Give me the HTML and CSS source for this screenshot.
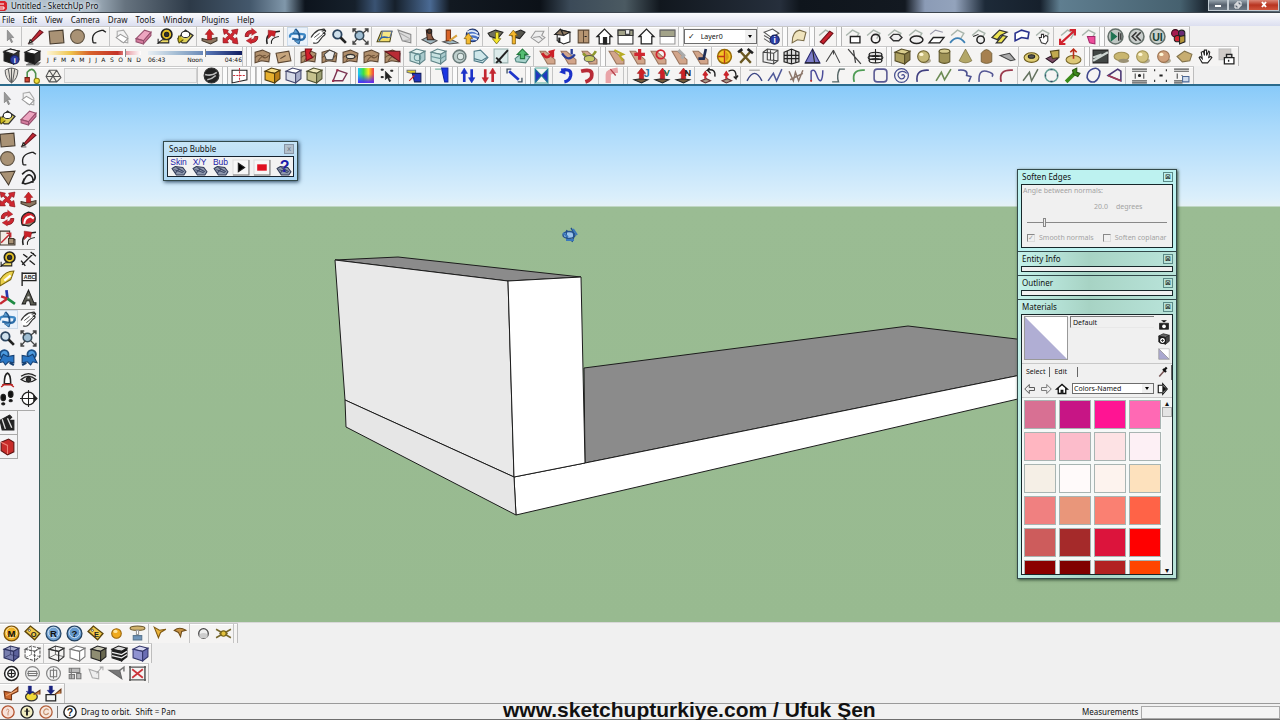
FILE: index.html
```html
<!DOCTYPE html>
<html lang="en">
<head>
<meta charset="utf-8">
<title>Untitled - SketchUp Pro</title>
<link rel="stylesheet" href="styles.css">
</head>
<body>
<header class="titlebar">
  <svg class="logo" viewBox="0 0 8 12"><path d="M0 1h5l2 2v6l-2 2H0z" fill="#d8242c"/><path d="M0 4h4M0 7h4v2H0" stroke="#fff" fill="none"/></svg>
  <h1 class="title">Untitled - SketchUp Pro</h1>
  <div class="winbtns">
    <button aria-label="Minimize"><svg viewBox="0 0 10 8"><path d="M2 5h6" stroke="#fff" stroke-width="2"/></svg></button>
    <button aria-label="Restore"><svg viewBox="0 0 10 8"><path d="M4 1h4v4H4zM2 3h4v4H2z" stroke="#fff" fill="#56616e"/></svg></button>
    <button class="quit" aria-label="Close"><svg viewBox="0 0 10 8"><path d="M3 1l4 5M7 1L3 6" stroke="#fff" stroke-width="2"/></svg></button>
  </div>
</header>
<nav class="menu">
  <button>File</button><button>Edit</button><button>View</button><button>Camera</button><button>Draw</button><button>Tools</button><button>Window</button><button>Plugins</button><button>Help</button>
</nav>
<section class="toolbars">
  <div class="row">
    <div class="bar" data-tools="select : pencil rect circle arc | component eraser tape paint | push move rotate offset : orbit* pan zoom extents | photo terrain | person crayon earth | getmodel share sheet : iso top front side front2 side2 ;"></div>
    <label class="combo layer"><span class="tick">✓</span><select aria-label="Layer"><option>Layer0</option></select></label>
    <div class="bar end" data-tools=": layers ; fold ; redpen ; bzrect bzcirc bzhex bzell bzpar bzarc bzcirc2 bzyel , bzblue bzhand : redarrow pinkbox ; play rewind ui gems"></div>
  </div>
  <div class="row">
    <div class="bar" data-tools=", shadowset shadow"></div>
    <div class="sun">
      <input class="months" type="range" min="0" max="100" value="84" aria-label="Date">
      <div class="marks"><i>J</i><i>F</i><i>M</i><i>A</i><i>M</i><i>J</i><i>J</i><i>A</i><i>S</i><i>O</i><i>N</i><i>D</i></div>
    </div>
    <div class="sun">
      <input class="hours" type="range" min="0" max="100" value="60" aria-label="Time">
      <div class="marks"><i>06:43</i><i>Noon</i><i>04:46</i></div>
    </div>
    <div class="bar end" data-tools=": ; sand1 sand2 : sand3 sand4 sand5 sand1 sand6 : gl1 gl2 gl3 gl4 sword gl5 : fr1 fr2 fr3 ; jt1 jt2 jt3 jt4 jt5 | coin tools : box3 grid3 cone3 lines needle stack ; cube ball cyl pyr dome plate | torus boxes disc ; slope blob ball2 ball3 blob2 hand lock ,"></div>
  </div>
  <div class="row">
    <div class="bar" data-tools=", shell path net"></div>
    <div class="field"></div>
    <div class="bar end" data-tools=": globe ; , section ; ; ycube wcube gcube : quad ; rainbow points ; flag ; bluebar ; updown redud : diag ; bow : bcurve rcurve : pcurve : : pj pv pn : undo2 redo2 : c1 c2 c3 c4 c5 c6 c7 c8 c9 c10 c11 c12 c13 | c14 c15 wrench c16 c17 : al1 al2 al3 ,"></div>
  </div>
</section>
<main class="work">
  <aside class="side">
    <div class="pair" data-tools="select component paint eraser"></div>
    <div class="pair" data-tools="rect pencil circle arc tri squiggle"></div>
    <div class="pair" data-tools="move push rotate follow scale offset"></div>
    <div class="pair" data-tools="tape dims protract label axes text3d"></div>
    <div class="pair" data-tools="orbit* pan zoom extents prev next"></div>
    <div class="pair" data-tools="camera eye feet compass"></div>
    <div class="pair single" data-tools="clapper"></div>
    <div class="pair single" data-tools="redbox"></div>
  </aside>
  <section class="canvas">
    <svg class="model" viewBox="40 86 1240 536" preserveAspectRatio="xMinYMin slice">
      <g stroke="#1c1c1c" stroke-width="1" stroke-linejoin="round">
        <path d="M584 368L908 326L1100 349L1100 359L585 463z" fill="#8b8b8b"/>
        <path d="M514 477L585 463L1100 359V380L516 515z" fill="#fff"/>
        <path d="M335 260L398 257L581 277L508 281z" fill="#8b8b8b"/>
        <path d="M335 260L508 281L514 477L345 400z" fill="#e9e9e9"/>
        <path d="M345 400L514 477L516 515L346 427z" fill="#e6e6e6"/>
        <path d="M508 281L581 277L585 463L514 477z" fill="#fff"/>
      </g>
      <g fill="none" stroke="#24508c" stroke-width="1.500"><ellipse cx="569" cy="235" rx="6" ry="3.500" fill="#9cc4ea"/><path d="M571 228q5 6 1 14M567 230q-2 5 1 10"/><path d="M563 233l5 4M573 229l4 6M566 240h8" stroke="#3b78bc" stroke-width="2"/></g>
    </svg>

    <section class="win soap">
      <header><h2>Soap Bubble</h2><button class="x" aria-label="Close">x</button></header>
      <div class="soapbar" data-tools="skin xy bub run stop help"></div>
    </section>

    <div class="tray">
      <section class="win">
        <header><h2>Soften Edges</h2><button class="x" aria-label="Close">⊠</button></header>
        <div class="inner soften">
          <label for="ang">Angle between normals:</label>
          <p class="deg"><output>20.0</output><span>degrees</span></p>
          <input id="ang" class="angle" type="range" min="0" max="180" value="21" disabled>
          <div class="checks">
            <label><input type="checkbox" checked disabled>Smooth normals</label>
            <label><input type="checkbox" disabled>Soften coplanar</label>
          </div>
        </div>
      </section>
      <section class="win"><header><h2>Entity Info</h2><button class="x" aria-label="Close">⊠</button></header><div class="inner slim"></div></section>
      <section class="win"><header><h2>Outliner</h2><button class="x" aria-label="Close">⊠</button></header><div class="inner slim"></div></section>
      <section class="win">
        <header><h2>Materials</h2><button class="x" aria-label="Close">⊠</button></header>
        <div class="inner mats">
          <div class="current">
            <svg class="preview" viewBox="0 0 42 42"><path d="M0 0h42v42z" fill="#fff"/><path d="M0 0v42h42z" fill="#b0aed4"/></svg>
            <input class="matname" value="Default" aria-label="Material name">
            <div class="mattools" data-tools="pane create defmat"></div>
          </div>
          <div class="tabs"><button class="on">Select</button><button>Edit</button><span data-tools="dropper"></span></div>
          <div class="lib">
            <span data-tools="back fwd home"></span>
            <label class="combo"><select aria-label="Library"><option>Colors-Named</option></select></label>
            <span data-tools="details"></span>
          </div>
          <div class="list">
            <div class="swatches"></div>
            <div class="scroll"><button aria-label="Up">▴</button><b></b><button aria-label="Down">▾</button></div>
          </div>
        </div>
      </section>
    </div>
  </section>
</main>
<section class="toolbars bottom">
  <div class="row"><div class="bar end" data-tools=", gm gtag gr gq gtag2 gball gtable"></div><div class="bar end narrow" data-tools="gfly gfly2 : gsph gx :"></div></div>
  <div class="row"><div class="bar end" data-tools=", bxray bdash | bwire bhid bshade bzebra bmono"></div></div>
  <div class="row"><div class="bar end" data-tools=", tg1 tg2 tg3 tg4 tg5 tg6 tg7"></div></div>
  <div class="row"><div class="bar end" data-tools=", or1 or2 or3"></div></div>
</section>
<footer class="status">
  <div class="hint"><span data-tools="st1 st2 st3"></span><span class="split"></span><span data-tools="sthelp"></span><span>Drag to orbit.&nbsp; Shift = Pan</span></div>
  <strong class="credit">www.sketchupturkiye.com / Ufuk Şen</strong>
  <label class="measure">Measurements<input type="text"></label>
</footer>
<script src="app.js"></script>
</body>
</html>
```
FILE: styles.css
```css
* { box-sizing: border-box; }
body { margin: 0; height: 100vh; display: flex; flex-direction: column; overflow: hidden; background: #f0f0f0; color: #111; font: 8px/10px "Noto Sans", "Open Sans", sans-serif; }
button, input, select { font: inherit; color: inherit; }
button { border: 0; padding: 0; background: none; }
h1, h2, p { margin: 0; font: inherit; }
svg { display: block; }

.titlebar { display: flex; align-items: center; height: 13px; flex: none; background: linear-gradient(90deg, #b8c6d2 0, #aab9c6 90px, #66737f 125px, #2d3a48 190px, #44586c 250px, #8097aa 285px, #0d141d 305px, #16202b 355px, #3a5373 375px, #16202b 395px, #4a6a94 430px, #121921 450px, #0c1118 540px, #3b4a58 570px, #4b5a62 625px, #11171e 660px, #262f3c 780px, #0f151c 800px, #131921 905px, #8b9bb6 925px, #93a3bc 955px, #1d2a38 985px, #16202c 1040px, #5f7e90 1060px, #46616f 1180px, #1d2833 1205px, #5c6b78 1280px); border-bottom: 1px solid #3c454e; }
.logo { width: 8px; height: 12px; }
.title { padding-left: 3px; flex: 1; color: #0c0f12; text-shadow: 0 0 3px #fff, 0 0 5px #dfe7ee; }
.winbtns { display: flex; align-self: flex-start; height: 11px; margin-right: 1px; }
.winbtns button { width: 20px; background: linear-gradient(#98a4ae, #56616e 50%, #6e7a86); border: 1px solid #c3ccd4; border-top: 0; display: grid; place-items: center; }
.winbtns .quit { width: 31px; background: linear-gradient(#dc8878, #b83420 50%, #d0543c); }
.winbtns svg { width: 10px; height: 8px; }

.menu { display: flex; align-items: center; gap: 8px; height: 13px; padding-left: 2px; flex: none; background: linear-gradient(#fafbfd, #dcdff0); }
.toolbars { flex: none; }
.row { display: flex; width: fit-content; height: 20px; border-top: 1px solid #c9c9c9; box-shadow: inset 0 1px #fff; align-items: stretch; background: #f5f4f3; }
.toolbars:not(.bottom) { height: 60px; border-bottom: 2px solid #2b6b8c; }
.toolbars:not(.bottom) .row:last-child { height: 18px; }
.bar { display: flex; align-items: center; }
.bar.end { border-right: 1px solid #bdbdbd; }
.tool { width: 21px; height: 19px; display: grid; place-items: center; flex: none; }
.tool svg { width: 17px; height: 17px; overflow: visible; }
.narrow .tool { width: 20px; }
.tool.active { background: #eaf2fb; outline: 1px solid #cddbea; outline-offset: -1px; }
.s1 { width: 1px; }
.s3, .s4, .s6 { align-self: stretch; border-left: 1px solid #c4c4c4; }
.s3 { width: 3px; }
.s4 { width: 4px; }
.s6 { width: 6px; border-right: 1px solid #b4b4b4; background: #fbfbfb; }

.combo { display: flex; align-items: center; background: #fff; border: 1px solid #6d6d6d; height: 11px; }
.combo select { flex: 1; min-width: 0; height: 9px; padding: 0 0 0 1px; border: 0; appearance: none; font-size: 7px; line-height: 9px; background: linear-gradient(#f0f0f0, #f0f0f0) right / 11px 9px no-repeat, #fff; outline: 0; }
.combo::after { content: ""; border: 2px solid transparent; border-top: 3px solid #000; border-bottom: 0; margin: 0 4px 0 -8px; pointer-events: none; }
.layer { width: 73px; height: 15px; align-self: center; }
.layer select { height: 13px; background-size: 11px 13px; font-size: 7px; }
.tick { padding: 0 5px 0 3px; font-family: "DejaVu Sans", sans-serif; }

.sun { width: 94px; margin-left: 4px; padding-top: 4px; }
.sun + .sun { margin-left: 7px; }
.sun input { display: block; width: 100%; height: 4px; margin: 0; appearance: none; }
.sun input::-webkit-slider-thumb { appearance: none; width: 3px; height: 8px; background: #fff; border-right: 1px solid #888; }
.months { background: linear-gradient(90deg, #fdf6d8, #efc44c 25%, #d8642c 45%, #c43228 75%, #e8a0a8 85%, #fff); }
.hours { background: linear-gradient(90deg, #e9eff4, #a4bdd4 30%, #7391bc 55%, #5878b8 62%, #101c60); }
.marks { display: flex; justify-content: space-between; font: 6px/8px "DejaVu Sans", sans-serif; padding-top: 1px; }
.marks i { font-style: normal; }
.field { width: 133px; margin: 1px 0; border: 1px solid #d0d0d0; background: #f0f0f0; }

.work { flex: 1; min-height: 0; display: flex; }
.side { width: 40px; flex: none; padding-top: 3px; border-right: 1px solid #3a5a5c; background: #f3f3f5; }
.pair { display: grid; grid-template-columns: 21px 21px; width: 38px; margin-left: -3px; padding-bottom: 2px; border-bottom: 1px solid #a9a9a9; }
.pair.single { width: 21px; padding: 2px 0; border-right: 1px solid #a9a9a9; }
.canvas { position: relative; flex: 1; min-width: 0; overflow: hidden; background: linear-gradient(#88caf9, #a9d9fb 40px, #dbeffb 112px, #e4f1f5 120px, #9abc93 121px, #98ba90); }
.model { width: 100%; height: 100%; }

.win { border: 1px solid #33494a; background: linear-gradient(90deg, #c4f1ea, #a7d3c4 45%, #b9e4da); padding: 0 3px 3px; }
.win > header { display: flex; align-items: center; justify-content: space-between; height: 14px; padding-left: 1px; }
.x { width: 10px; height: 10px; border: 1px solid #5b8a87; font: 7px/7px "DejaVu Sans", sans-serif; }
.soap { position: absolute; left: 123px; top: 55px; width: 135px; background: linear-gradient(#c7e5f7, #b0d8f4); box-shadow: 1px 1px 4px #24405c; }
.soap > header { padding-left: 2px; }
.soap .x { background: #b3c0cc; border-color: #8795a5; color: #6a7480; }
.soapbar { display: flex; height: 21px; border: 1px solid #16222e; background: #f2f2f2; }
.soapbar .tool { height: 20px; }
.tray { position: absolute; right: 103px; top: 83px; width: 160px; box-shadow: 1px 1px 3px #2f4a34; }
.tray .win + .win { border-top: 0; }
.tray .win:first-child { background: #bdf2f0; }
.inner { border: 1px solid #17272a; background: #f0f0f0; }
.slim { height: 6px; }
.soften { height: 64px; padding: 1px 1px; color: #a3a3a3; font-size: 7px; }
.soften label { display: block; line-height: 9px; }
.deg { display: flex; gap: 8px; padding: 7px 0 6px 71px; line-height: 9px; }
.angle { display: block; width: 140px; height: 10px; margin: 0 4px; appearance: none; background: linear-gradient(#888, #888) center / 100% 1px no-repeat; }
.angle::-webkit-slider-thumb { appearance: none; width: 3px; height: 9px; border: 1px solid #888; background: #eee; }
.checks { display: flex; gap: 9px; padding: 6px 0 0 4px; white-space: nowrap; }
.checks label { display: flex; align-items: center; gap: 4px; }
.checks input { appearance: none; width: 8px; height: 8px; margin: 0; border: 1px solid #888; border-right-color: #ddd; border-bottom-color: #ddd; }
.checks input:checked::after { content: "✓"; display: block; font: 7px/6px "DejaVu Sans", sans-serif; }
.current { display: flex; gap: 2px; height: 49px; padding: 1px 2px 0; border-bottom: 1px solid #c8c8c8; }
.preview { width: 44px; height: 44px; border: 1px solid #999; flex: none; }
.matname { width: 84px; height: 12px; padding: 0 2px; border: 1px solid #777; border-right: 0; border-bottom-color: #e8e8e8; background: #f0f0f0; font-size: 7px; }
.mattools .tool { width: 15px; height: 15px; }
.mattools svg { width: 12px; height: 12px; }
.tabs { display: flex; height: 16px; align-items: center; font-size: 7px; }
.tabs button { padding: 0 4px; height: 10px; border-right: 1px solid #666; }
.tabs button + button { padding-right: 10px; }
.tabs span { margin-left: auto; }
.tabs .tool { width: 19px; height: 15px; }
.tabs svg { width: 12px; height: 12px; }
.lib { display: flex; align-items: center; height: 17px; }
.lib span { display: flex; }
.lib .tool { width: 16px; }
.lib .tool svg { width: 12px; height: 12px; }
.lib .combo { width: 82px; margin-left: 2px; }
.list { display: flex; height: 177px; border-top: 1px solid #c8c8c8; }
.swatches { display: grid; grid-template-columns: repeat(4, 32px); grid-auto-rows: 29px; gap: 3px; padding: 2px 0 0 2px; overflow: hidden; background: #f6f9f8; width: 140px; flex: none; }
.swatches button { border: 1px solid #a8b4b2; }
.scroll { display: flex; flex-direction: column; flex: 1; background: #f4f4f4; }
.scroll button { height: 9px; line-height: 8px; }
.scroll b { height: 10px; border: 1px solid #aaa; background: #e4e4e4; margin-bottom: auto; }

.bottom { height: 81px; border-top: 1px solid #d8d8d8; }
.status { flex: none; display: grid; grid-template-columns: 503fr 578fr 199fr; height: 17px; align-items: center; border-top: 1px solid #9a9a9a; border-bottom: 1px solid #6e6e6e; background: #f1f1f1; }
.hint { display: flex; align-items: center; }
.hint > span { display: flex; }
.hint .tool { width: 18px; height: 15px; margin-left: -1px; margin-right: 2px; }
.hint .tool svg { width: 14px; height: 14px; }
.split { height: 12px; width: 5px; border-left: 1px solid #777; }
.credit { font: bold 21px/16px "Liberation Sans", Arial, sans-serif; white-space: nowrap; position: relative; z-index: 1; bottom: 2px; }
.measure { display: flex; gap: 3px; align-items: center; padding-left: 1px; }
.measure input { flex: 1; min-width: 0; height: 13px; border: 1px solid #aaa; background: #f4f4f4; }
```
FILE: app.js
```js
const p = (d, fill = 'none', stroke = '#222', w = 1) => `<path d="${d}" fill="${fill}" stroke="${stroke}" stroke-width="${w}"/>`;
const o = (x, y, r, fill = 'none', stroke = '#222', w = 1) => `<circle cx="${x}" cy="${y}" r="${r}" fill="${fill}" stroke="${stroke}" stroke-width="${w}"/>`;
const e = (x, y, rx, ry, fill = 'none', stroke = '#222', w = 1) => `<ellipse cx="${x}" cy="${y}" rx="${rx}" ry="${ry}" fill="${fill}" stroke="${stroke}" stroke-width="${w}"/>`;
const t = (s, x, y, fill = '#222', size = 8, weight = 'bold') => `<text x="${x}" y="${y}" fill="${fill}" font-family="Liberation Sans, sans-serif" font-weight="${weight}" font-size="${size}" text-anchor="middle">${s}</text>`;
const cube = (a, b, c, s = '#222') => p('M1 4L7 1L15 3L10 6z', a, s) + p('M1 4L10 6V15L1 12z', b, s) + p('M10 6L15 3V11L10 15z', c, s);
const glass = cube('#e4f3f1', '#c8e2e1', '#a9cacd', '#5f8488');
const sand = p('M1 4L8 2L15 5L14 13L7 12L1 14z', '#b08f6c', '#5b4632') + p('M1 9q4-4 7-1t6-1M4 12q3-5 7-5', 'none', '#6e5237');
const frayed = p('M1 3h5l9 8v4H8z', '#d2a58a', '#98735c');
const redUp = p('M8 1l4 5H10v5H6V6H4z', '#cc2226', '#8f1114', .5);
const pale = p('M2 7l6-5 6 3-3 5', 'none', '#a9b5ac', 1.3);
const orbit = p('M1 9q-1-4 5-4l8 1q2 1 0 3', 'none', '#3c86c4', 2.2) + p('M15 8q-1 4-6 3l-6-1', 'none', '#2b6ca8', 2) + p('M6 1q6 5 3 14', 'none', '#1d5085', 1.8) + p('M6 1l-2 4 5 0zM9 15l-4-3 6-1z', '#5b9fd6', '#1d5085', .6);
const lens = o(6, 6, 4, '#cfe0ec', '#2c4560', 1.7) + p('M9 9l5 5', 'none', '#222', 2.5);
const ball = (c, d) => e(10, 12, 5, 2.5, '#b1aa95', 'none') + o(8, 8, 5.5, c, d) + e(6, 6, 2, 1.6, '#fff8d8', 'none');
const badge = (s, c, d) => o(8, 8, 7, c, d, 1.2) + o(8, 7, 5, c, '#fff', .6) + t(s, 8, 11.5, '#111', 9);
const tag = s => p('M1 6l5-5 9 7-5 6z', '#f2c94a', '#5a430c', 1.3) + o(5, 5, 1, '#fff', '#333', .7) + t(s, 9, 11, '#222', 7);
const panHand = p('M1 9q3-5 7-7l5-1q2 1-2 2l3-1q2 1-2 3l2 0q1 1-2 3l-4 5q-2 2-5 1', '#fff', '#333', 1.1) + p('M4 9l5-4M6 11l6-5', 'none', '#333', .8);
const hand = p('M5 14L2 9l1-1 2 2-1-6 2-1 1 4V2h2v5l2-4 1 1-1 5 2-1 1 1-4 5z', '#fff', '#222');
const magic = p('M2 9l3-2 7 1 3 4-2 3H6z', '#8f98ac', '#303a56') + p('M4 10l8 3M6 8l7 4M5 13l4-4', 'none', '#3e4867');
const blueWire = (a, b, c, s) => cube(a, b, c, s) + p('M1 12L7 9L15 11M7 9V1', 'none', s, .6);
const fish = o(5, 5, 4, '#4d9be0', '#1c4f86', 1.7) + p('M4 5l4 2 6-1v7l-5-1-3 3-2-3-4 1z', '#2a76c4', '#153e70') + p('M10 13l4 2', 'none', '#153e70', 2);

const icons = {
  select: p('M5 2v10l2-2 2 4 1-1-2-4h3z', '#999', '#777', .6),
  pencil: p('M2 14L12 2l3 2L5 13z', '#c32834', '#6e1620') + p('M2 14l3-1-2-2z', '#f0d6a0', '#222') + p('M1 15h5', 'none', '#222', .7),
  rect: p('M1 3l13-1 1 12-13 1z', '#a99275', '#43382c'),
  circle: o(8, 8, 6.5, '#a99275', '#5c5040'),
  arc: p('M3 14Q0 4 12 2M3 14h3M12 2l3 2', 'none', '#222', 1.3),
  tri: p('M1 3l14-1-6 13z', '#a99275', '#43382c'),
  squiggle: p('M2 5q7-7 11-1t-4 9-5-3 6-4 2 7M2 14l2-5', 'none', '#222', 1.5),
  component: p('M3 3l6-1 4 6v6l-6-1-4-5z', '#f3f3f3', '#aaa') + p('M2 9l4-3 7 4-4 4z', '#fff', '#999'),
  eraser: p('M1 10L9 2l6 2-7 8z', '#eda5c0', '#97506e') + p('M1 10l7 2v3l-7-2zM8 12l7-8v3l-7 8z', '#d57c9e', '#97506e'),
  tape: o(10, 6, 5, '#e3c026', '#222', 1.5) + o(10, 6, 2, '#333') + p('M2 14h10v-3H6zM2 10v5', '#eedb65', '#222'),
  paint: p('M1 10L8 2l7 5-6 7H5z', '#dfd25c', '#333', 1.3) + e(8, 6, 4, 3, '#fff', '#222') + p('M2 7q-2 4 0 7l4-3', '#c8b61c', '#554b0c'),
  push: p('M1 10l5 1 9-2v3l-6 3-8-3z', '#8c7660', '#43382c') + redUp,
  move: p('M1 1l5 1-1 2 3 2 2-2-1-2 6-1-1 5-2-1-2 3 2 2 2-1 1 6-5-1 0-2-3-2-2 2 1 2-5 0 0-5 2 1 3-3-2-2-2 1z', '#cf2630', '#8a141b', .6),
  rotate: p('M2 8q0-6 7-6l-1 3q-3 0-3 3zM14 8q0 6-7 6l1-3q3 0 3-3z', '#cf2630', '#8a141b', .8) + p('M8 0l5 4-5 3M8 9l-5 3 5 3', '#cf2630', '#8a141b', .4),
  offset: p('M3 15Q0 4 15 3', 'none', '#222', 1.5) + p('M7 15q-1-6 7-7', 'none', '#222') + p('M4 2l7 1-1 5-3-1-3 3z', '#cc2229', '#8a141b', .5),
  follow: p('M2 14q-3-9 6-12 8 1 6 9l-6 4z', '#d2242d', '#222') + p('M4 13q0-6 6-7l3 2', 'none', '#fff', 2) + p('M2 14l7 1 5-4', '#93816b', '#222'),
  scale: p('M1 2h9v8h5v5H1z', '#f1ece5', '#43382c') + p('M9 9h5v5H9z', '#a99275', '#43382c') + p('M2 13l8-8M7 4h4v4', 'none', '#c22b33', 1.4),
  orbit,
  pan: panHand,
  zoom: lens,
  extents: o(7, 7, 4, '#9fbdd2', '#344b5d', 1.5) + p('M1 1l4 4M15 1l-5 4M1 15l4-5M10 10l5 5M1 4V1h3M12 1h3v3M1 12v3h3M15 12v3h-3', 'none', '#444', 1.3),
  prev: fish, next: `<g transform="translate(16 0) scale(-1 1)">${fish}</g>`,
  photo: p('M1 13l4-10h10l-2 10z', '#f2dd6a', '#4d4718') + p('M6 3h9l-2 6H5z', '#f6e684', '#5a6d95') + p('M3 12q2-5 8-3', 'none', '#2c62a8', 1.5),
  terrain: p('M1 2l12 4v8L5 12z', '#ddd', '#888') + p('M3 5l9 5M5 12l8-1', 'none', '#aaa'),
  person: p('M1 11l6-3 8 4-6 3z', '#9fb8c2', '#555') + p('M5 2h5v5l2 4H6z', '#8e5c43', '#3b231a') + o(8, 3, 2, '#5a3a2b'),
  crayon: p('M1 13l8-2 6 3-8 1z', '#9fb8c2', '#555') + p('M4 2h4v10H4z', '#d96428', '#7c3410') + p('M7 12l7-5', 'none', '#d9a23c', 2),
  earth: o(9, 7, 6, '#4a73c8', '#1f3164') + p('M4 4q5-3 10 1M3 8q6-4 12 0M5 11q4-2 8 0', 'none', '#e3ebf5', 1.5) + p('M5 5l4 5H7v5H3v-5H1z', '#f3ba32', '#805c0c', .7),
  getmodel: p('M1 5l7-3 7 2-5 6-7-2z', '#70705e', '#222') + p('M8 4h3v6h2l-4 5-4-5h3z', '#f5e62c', '#6b6210', .7),
  share: p('M4 5l8-3 4 2-5 6-7-2z', '#55554d', '#222') + p('M5 2l4 5H7v8H4V7H1z', '#f3b62c', '#795609', .7),
  sheet: p('M2 9l4-6h8l-2 4 3 2-6 5z', '#eee', '#999') + p('M4 9l6-1 3 3', 'none', '#999'),
  iso: p('M1 6l6-4 8 2v9l-6 2-6-3V6z', '#fff', '#222') + p('M1 6l5-5 3 6zM7 2l8 2-6 3z', '#8f7a61', '#222') + p('M5 9v5', 'none', '#222', 2),
  top: p('M3 2h10v12H3z', '#b69572', '#5c4733') + p('M8 2v12', 'none', '#5c4733') + p('M9 8h2', 'none', '#222'),
  front: p('M1 8l7-7 7 7h-2v7H3V8z', '#fff', '#222', 1.2) + p('M7 9h3v6H7z', '#222'),
  side: p('M1 2h14v13H1z', '#fff', '#333') + p('M1 2h14v5H1z', '#a3a389', '#333') + p('M8 2v4h4V2', '#eee', '#444'),
  front2: p('M1 8l7-7 7 7h-2v7H3V8z', '#fff', '#222', 1.2),
  side2: p('M1 2h14v13H1z', '#fff', '#999') + p('M1 2h14v6H1z', '#a3a389', '#666'),
  layers: p('M1 4l8-3 6 4-7 4zM1 7l7 4 3-2M1 10l6 4', '#fff', '#555') + o(11, 11, 4.3, '#2c3fa6', '#14205f') + t('i', 11, 14, '#fff', 8),
  fold: p('M2 14Q2 3 9 2l6 2-2 8-6-1z', '#f0e4bd', '#786a46'),
  redpen: pale + p('M3 13L12 3l3 2L6 15z', '#c8222e', '#6f1018'),
  bzrect: pale + p('M6 8h9v6H6z', '#fff', '#222', 1.3), bzcirc: pale + o(10, 10, 4, 'none', '#222', 1.5),
  bzhex: pale + p('M4 9l3-3h5l3 3-3 3H7z', '#eee', '#333', 1.3), bzell: pale + e(9, 11, 6, 3.5, '#eee', '#222', 1.4),
  bzpar: p('M2 6l5-4 7 2', 'none', '#99a', 1.2) + p('M1 14l4-5h10l-4 5z', '#fff', '#222', 1.3), bzarc: pale + p('M1 14q7-9 14 0', 'none', '#3c80b4', 1.6),
  bzcirc2: pale + o(10, 11, 3.5, '#eee', '#222', 1.4) + p('M3 8l5-2', 'none', '#222'),
  bzyel: p('M1 9l7-7 7 2-6 3-3 4zM5 14l6-7 4 1-5 6z', '#eee452', '#333', 1.2),
  bzblue: p('M2 12V5l6-3 7 2-1 6-6-1z', '#fff', '#28308c', 1.5), bzhand: pale + p('M7 14L5 9h2V6h2v3l2-2 2 1v4l-2 3z', '#fff', '#333'),
  redarrow: pale + p('M2 14L14 3M1 10v5h5M10 2h5v5', 'none', '#d12430', 2), pinkbox: pale + p('M7 8h7v7l-5-1z', '#ee4d9b', '#a3296a'),
  play: o(8, 8, 7, '#bfc7c3', '#65706b', 1.5) + p('M4 4v8l5-4z', '#1e7352', '#1e7352') + p('M11 4v8M13 5v6', 'none', '#333', 1.3),
  rewind: o(8, 8, 7, '#c9cecc', '#65706b', 1.5) + p('M8 4L4 8l4 4M12 4L8 8l4 4', 'none', '#333', 1.5),
  ui: o(8, 8, 7, '#c9d1cd', '#65706b', 1.5) + t('UI', 8, 12, '#173f35', 10),
  gems: o(5, 5, 3.5, '#a51c50', '#3b0c1e') + o(11, 5, 3, '#6a2a74', '#222') + o(7, 10, 3, '#d22434', '#222') + p('M9 8l5-1v6l-5 2z', '#b69638', '#222'),
  shadowset: cube('#555', '#1c1c1c', '#333') + p('M1 3L7 1l8 2-5 3z', '#eee') + o(11, 11, 4, '#2b3b9d', '#1a2462') + t('i', 11, 14, '#fff', 7),
  shadow: p('M6 14h9l-2 2H2z', '#777', '#777') + cube('#fff', '#1a1a1a', '#333'),
  sand1: sand, sand2: p('M1 5l12-2 2 9-12 2z', '#c6a57d', '#5b4632') + p('M5 10l5-3', 'none', '#5b4632'), sand3: sand + p('M5 1h6L9 5l3 4-6 3z', '#d31f2c', '#7c0f18'),
  sand4: sand + p('M3 6l5-4 5 2-2 7H5z', '#eee', '#444'), sand5: sand + e(8, 8, 4, 2, '#e8e2d4', '#333'), sand6: sand + p('M1 3h14v10z', '#b92c35', '#611920'),
  gl1: glass + o(8, 9, 3, 'none', '#69969a'), gl2: glass + p('M1 8l9 2 5-3', 'none', '#69969a'), gl3: o(8, 8, 6, '#bfd0ce', '#6b7c7b', 1.5) + o(9, 8, 3, '#dde9e7', '#71817f'),
  gl4: p('M2 3l6-1 7 7-5 5-8-2z', '#cfe7ea', '#4e7a86') + p('M2 10l7 2 5-3', 'none', '#4e7a86'), sword: p('M1 1h13v13H1z', '#dcebea', '#9ab3b1') + p('M14 2L5 12M3 9l5 5M3 14l3-3', 'none', '#222', 1.8),
  gl5: p('M1 10l5-4 9 2-4 6-9-1z', '#a9d4cd', '#4d817a') + p('M8 1l5 5h-3v4H6V6H3z', '#54bd72', '#247a3c'),
  fr1: frayed + p('M3 5q5 8 10-2l-4 1M13 3v6', 'none', '#cb2028', 2.5), fr2: frayed + p('M2 5q6 9 12 1M11 1v5', 'none', '#283d98', 2.2), fr3: frayed + p('M2 5q6 8 12-2', 'none', '#8d972d', 2.5) + e(8, 10, 5, 3, '#c6ca67', '#555'),
  jt1: frayed + p('M6 2l8 4-3 1 3 5', 'none', '#b7ab23', 2), jt2: frayed + p('M10 1v10M5 6h10', 'none', '#cf2630', 3), jt3: frayed + o(10, 6, 4, 'none', '#cf2630', 1.7),
  jt4: frayed + p('M7 2l5 5-2 3', 'none', '#aaa', 3), jt5: frayed + p('M13 1l-2 9H6', 'none', '#202e55', 2.5),
  coin: o(8, 8, 6.5, '#f4c524', '#976a08', 1.4) + p('M8 2v12M2 8h6', 'none', '#be3718', 1.3) + p('M9 3q6 5 0 10z', '#d69c18', 'none'),
  tools: p('M3 3l10 11M13 3L3 14', 'none', '#6b5923', 2.2) + p('M1 4l4-3M10 1l5 4', 'none', '#222', 2.5),
  box3: p('M1 4l4-3 10 1v10l-4 3-10-2zM1 4l10 1 4-3M11 5v10M5 1v10l10 1M8 2v9', '#eee', '#444'), grid3: p('M1 4l7-3 7 3v9l-7 2-7-2zM1 7h14M1 10h14M4 3v11M8 1v14M12 3v11', '#ddd', '#222', 1.1),
  cone3: p('M8 1l7 13H1z', '#7b7bc7', '#272770') + p('M8 1l2 13M1 14h14', 'none', '#222'), lines: p('M8 2L1 13M8 2l6 12M8 2v4', 'none', '#444'),
  needle: p('M2 1l12 14M7 2l2 12', 'none', '#444', 1.2), stack: e(8, 6, 6, 2, '#ddd', '#222') + e(8, 9, 7, 2, 'none', '#222') + e(8, 12, 6, 2, 'none', '#222') + p('M8 1v13M2 6v6M14 6v6', 'none', '#222'),
  cube: cube('#d9cd8e', '#ac9f5e', '#837744', '#554c26'), ball: ball('#c5b877', '#6d6230'),
  cyl: p('M3 3v10q5 3 10 0V3z', '#9e9256', '#5f562b') + e(8, 3, 5, 2, '#d7cc90', '#5f562b'), pyr: p('M8 1l6 11q-6 4-12 0z', '#b3a768', '#6b612f', .6), dome: p('M3 5q5-7 10 0v8q-5 3-10 0z', '#a6804f', '#65542d', .7),
  plate: p('M1 7l9-2 5 6-4 1z', '#aaa', '#444'),
  torus: e(8, 9, 7, 4.5, '#e0ce74', '#6d5c1b') + e(8, 8, 3, 1.7, '#555', '#222'), boxes: p('M2 10l6-3 5 3-5 4z', '#7a4c65', '#2c1625') + p('M6 3l8-1v7l-6 1z', '#c1a94e', '#4f431b'), disc: e(8, 11, 7, 4, '#ddc877', '#79682b') + p('M8 10V2M5 4l3-3 3 3', 'none', '#ba2c18', 1.5),
  slope: p('M1 2h14v12H1z', '#424745', '#222') + p('M1 12L15 4M1 9l8-3', 'none', '#cdd5d1', 2), blob: e(8, 8, 7, 4, '#c9b66f', '#9f8f55') + e(10, 12, 5, 2, '#9b9275', 'none'), ball2: ball('#d2c27f', '#9f9051'), ball3: ball('#cfa07a', '#9b7250'), blob2: p('M1 8l7-5 7 3-2 6-7 1z', '#c7ad70', '#82724a'),
  hand, lock: p('M1 1h11v10H1z', '#d1cbc8', '#bbb') + p('M6 9h9v6H6z', '#fff', '#222', 1.2) + p('M8 9V6h5v3M10 11v2', 'none', '#222', 1.3),
  shell: p('M2 3q6-4 12 0 0 8-6 12Q2 11 2 3zM5 2l2 12M8 1v14M11 2L9 14', '#e1ddd6', '#555', .9), path: p('M3 12V5q5-6 8 1v5', 'none', '#4f904e', 1.5) + p('M1 10h4v4H1z', '#cf4834', '#761d12') + o(12, 13, 2.5, '#f1df3a', '#8c7c10'),
  net: p('M1 9l3-6h7l4 7-4 4H4zM4 3l7 11M11 3L4 14M1 9h14', '#f0eee7', '#555'), globe: o(8, 8, 7, '#222', '#333') + p('M2 7q6 2 11-2M4 12q5-1 8-4', 'none', '#bbb', 1.6),
  section: p('M1 3h14v9l-14 3z', '#fff', '#222') + `<path d="M8 1v13M2 8h12" stroke="#c8323c" stroke-dasharray="2 1"/>`,
  ycube: cube('#f6dd86', '#e7b02e', '#ba7f19', '#513d0e'), wcube: cube('#fff', '#d7dbe8', '#a8aeca', '#45486d'), gcube: cube('#eee8bd', '#c6c28e', '#9da075', '#4f502f'),
  quad: p('M2 13L6 3l9 3-4 7z', 'none', '#7a3250', 1.3) + p('M1 12h2v2H1zM5 2h2v2H5z', '#a12f4e', 'none'),
  rainbow: '<linearGradient id="rb"><stop stop-color="#18c8ff"/><stop offset=".35" stop-color="#40e040"/><stop offset=".65" stop-color="#f8e820"/><stop offset="1" stop-color="#f03040"/></linearGradient><linearGradient id="rv" x2="0" y2="1"><stop offset=".4" stop-color="#24f" stop-opacity="0"/><stop offset="1" stop-color="#52f"/></linearGradient><path d="M0 1h15v14H0z" fill="url(#rb)"/><path d="M0 1h15v14H0z" fill="url(#rv)"/>',
  points: p('M6 4v8l2-2 2 4 1-1-2-3h3z', '#222', '#222', .6) + p('M2 2h2v1H2zM11 3h2v1h-2zM2 9h2v1H2z', '#222', '#222', .8),
  flag: p('M1 3h8v4L1 5z', '#dfcf25', '#777') + p('M6 6h8v8H8z', '#2434bd', '#15205f') + p('M3 13L8 8', 'none', '#c22'), bluebar: p('M8 1h6v13h-3z', '#1a36e4', '#1427a0') + p('M2 2h6', 'none', '#6a9'),
  updown: p('M4 14V3M11 2v11', 'none', '#1b32c8', 2.5) + p('M1 6l3-5 3 5zM8 10l3 5 3-5z', '#1b32c8', '#1b32c8', .5), redud: p('M11 14V3M4 2v11', 'none', '#c32730', 2.5) + p('M8 6l3-5 3 5zM1 10l3 5 3-5z', '#c32730', '#c32730', .5),
  diag: p('M3 4l9 8', 'none', '#1e35ca', 2.5) + p('M1 6V2h4M11 14h4v-4', 'none', '#456', 1.3), bow: p('M2 2l6 6-6 7zM14 2L8 8l6 7z', '#2037bf', '#1f7b92') + p('M2 1h12M14 15H2', 'none', '#5a9', 1),
  bcurve: p('M3 3q10-2 9 5-1 5-6 6', 'none', '#1c31c8', 3) + p('M1 5l6-4v6z', '#1c31c8', 'none'), rcurve: p('M2 4q11-3 10 4 0 4-6 6', 'none', '#b82b37', 3.5), pcurve: p('M4 15V7q0-3 9-4', 'none', '#e9a4a8', 5) + p('M6 2l5 6', 'none', '#b33c45', 1.2),
  pj: p('M1 12l6-1 7 1-6 3z', '#775c3c', '#222') + redUp + t('J', 13, 9, '#2a7aa8', 10), pv: p('M1 12l6-1 7 1-6 3z', '#775c3c', '#222') + redUp + t('V', 12, 8, '#1b6e48', 9), pn: p('M1 12l6-1 7 1-6 3z', '#775c3c', '#222') + redUp + t('N', 12, 8, '#222', 9),
  undo2: p('M1 13l5-2 4 2-5 2z', '#a98', '#633') + p('M5 6v5M3 8l2-3 2 3', 'none', '#cb252c', 2) + p('M14 9q1-8-7-6l2-2M7 3l3 3', 'none', '#222', 1.3), redo2: p('M1 13l5-2 4 2-5 2z', '#a98', '#633') + p('M5 6v5M3 8l2-3 2 3', 'none', '#cb252c', 2) + p('M7 4q8-4 7 7l-2-2M14 11l2-3', 'none', '#222', 1.3),
  c1: p('M1 13q7-14 14 0', 'none', '#3b4584', 1.4) + p('M3 3h10', 'none', '#999'), c2: p('M1 13L6 6l3 7L14 2', 'none', '#505999', 1.4), c3: p('M1 4l4 9 2-8 3 8 4-10M2 12l12-6', 'none', '#8b7569', 1.4), c4: p('M2 13V4q3-3 5 3t4 6q2-2 2-10', 'none', '#4c4d9a', 1.4) + o(2, 13, 1, '#b33', 'none'),
  c5: p('M2 14h6q-2-6 1-12h5', 'none', '#566', 1.4), c6: p('M3 14Q0 2 13 3', 'none', '#4f9c55', 1.7), c7: `<rect x="2" y="2" width="12" height="12" rx="3" fill="none" stroke="#5a5a93" stroke-width="1.5"/>`, c8: o(8, 8, 6.5, 'none', '#48508f', 1.2) + p('M8 8q2-2 3 1-1 3-4 2-4-3-1-6 4-2 7 1', 'none', '#48508f', 1.2),
  c9: p('M3 14Q1 2 14 3', 'none', '#403f80', 1.5), c10: p('M1 13l5-8 3 7 6-10', 'none', '#6c8b54', 1.5), c11: p('M2 3q10-1 8 5l4 1-2 5', 'none', '#4d5290', 1.5), c12: p('M2 14Q1 2 9 4t5 5', 'none', '#555794', 1.5), c13: p('M3 14Q0 2 14 3', 'none', '#9b3b4e', 1.7),
  c14: p('M1 13l6-8 2 8 6-11', 'none', '#63715d', 1.4), c15: o(8, 8, 6, 'none', '#659d93', 1.5) + p('M2 8h1M8 2v1M13 8h1M8 13v1', 'none', '#346', 2), wrench: p('M2 14L10 6', 'none', '#3c8b1a', 3.5) + p('M9 7l-1-4 4-2 0 4 3 1-2 3z', '#3c8b1a', '#28530f'), c16: p('M5 3q6-4 9 1 0 7-5 10-5 1-7-4 0-5 3-7z', 'none', '#42498e', 1.5), c17: p('M2 8l9-6 3 2v9z', 'none', '#4a3874', 1.5) + p('M2 8l12 5', 'none', '#a33b55', 1.5),
  al1: p('M1 2h14M1 4h14M1 13h14M1 15h14M4 6v5M12 6v5', 'none', '#555', 1.1) + o(8, 8, 1, '#222'), al2: p('M2 3h1M13 3h1M2 13h1M13 13h1M7 8h3', 'none', '#222', 2), al3: p('M1 2h14M1 4h14M1 13h8M1 15h8M4 6v5M8 8h1', 'none', '#555', 1.1) + p('M9 9h6v5H9z', '#cfdcee', '#4e6995'),
  dims: p('M2 13L13 2M1 9l4 5M10 1l5 4', 'none', '#222', 1.3) + p('M9 9l5 4M3 3l4 3', 'none', '#222', 1.3), protract: p('M1 9q5-8 13-8l-3 8-10 6z', '#ecd24b', '#7a660d') + p('M5 10l6-5', 'none', '#fff', 2), label: p('M2 2v13M2 3h13v7H2', '#f4f4f4', '#222', 1.3) + t('ABC', 9, 8.5, '#222', 5),
  axes: p('M8 9L7 1', 'none', '#2737aa', 2.5) + p('M8 9L1 14M8 9l-6-2', 'none', '#c52932', 2.2) + p('M8 9l7 5', 'none', '#1e8a43', 2.5), text3d: p('M2 14L8 1l5 12h2v2h-5l-1-4H6l-1 3z', '#5b5c52', '#222') + p('M7 8h2', 'none', '#eee', 2),
  camera: p('M5 12q0-9 3-10 3 1 3 10z', '#fff', '#222', 1.5) + p('M2 15l4-3M14 15l-4-3M3 13h10', 'none', '#b22', 1.3), eye: p('M1 8q7-6 14 0-7 5-14 0zM1 5q7-5 14 0', '#ddd', '#222', 1.1) + o(8, 8, 2, '#333'),
  feet: e(4, 7, 2.2, 3, '#111') + e(4, 13, 1.5, 1, '#111') + e(11, 4, 2.2, 3, '#111') + e(11, 10, 1.5, 1, '#111'), compass: o(8, 8, 6, '#fff', '#222', 1.2) + p('M8 0v16M0 8h16', 'none', '#222', 1) + p('M13 5l3 3-3 3z', '#222'),
  clapper: p('M1 6l9-5 2 2-3 3h5v9H3z', '#222', '#222') + p('M3 5l3 9M8 4l4 9', 'none', '#ddd', 1.3), redbox: p('M2 4l7-3 5 3v9l-6 3-6-4z', '#c72c2a', '#5d1312') + p('M2 4l6 3v8', 'none', '#ef8176'),
  skin: magic + t('Skin', 8, 6, '#1b1aa8', 8, 'normal'), xy: magic + t('X/Y', 8, 6, '#1b1aa8', 8, 'normal'), bub: magic + t('Bub', 8, 6, '#1b1aa8', 8, 'normal'),
  run: p('M0 1h15v14H0z', '#f7f7f7', '#ddd') + p('M15 1v14H0', 'none', '#777') + p('M5 4v8l6-4z', '#000'), stop: p('M0 1h15v14H0z', '#f7f7f7', '#ddd') + p('M15 1v14H0', 'none', '#777') + p('M3 5h9v6H3z', '#e01020', 'none'), help: magic + t('?', 9, 12, '#1b1aa8', 15),
  pane: p('M2 7h12v8H2z', '#222') + p('M4 3h8l-4 3z', '#111', 'none') + o(8, 11, 2.5, '#fff', 'none'), create: cube('#666', '#222', '#444') + o(6, 10, 4, '#fff', '#111', 1.4) + p('M6 8v4M4 10h4', 'none'), defmat: p('M1 1h14v14z', '#fff', '#bbb') + p('M1 1v14h14z', '#aaa8d0', '#999'),
  dropper: p('M3 14L10 6', 'none', '#755', 2) + p('M8 4l4 4M10 5l3-3', 'none', '#111', 3), back: p('M1 8l6-6v4h7v4H7v4z', '#eee', '#555', 1.3), fwd: p('M15 8L9 2v4H2v4h7v4z', '#eee', '#777', 1.3), home: p('M1 8l7-6 7 6h-2v6H9v-4H7v4H3V8z', '#fff', '#111', 1.8), details: p('M3 3h6V1l6 7-6 7v-2H3z', '#fff', '#111', 1.5) + p('M9 4l5 4-5 4z', '#111'),
  gm: badge('M', '#f0b429', '#7d5309'), gtag: tag('O'), gr: badge('R', '#75a5d4', '#27496b'), gq: badge('?', '#6499cf', '#23405e'), gtag2: tag('E'), gball: o(8, 8, 4.5, '#f0aa1e', '#9a650b') + e(7, 6, 2, 1.5, '#ffe49a', 'none'),
  gtable: e(8, 3, 7, 2, '#d2b36e', '#6c572a') + p('M7 5h2v4H7z', '#fff', '#999') + p('M4 10h8v4H4z', '#7096bb', '#5b7892'), gfly: p('M3 2l5 3 6-1-5 3-2 5z', '#ebb43b', '#805912'), gfly2: p('M3 5q5-4 11 0l-4 1-1 5-2-4z', '#c99443', '#6e4c19'), gsph: o(8, 8, 4.5, '#eee', '#444', 1.2) + e(8, 10, 4, 2.5, '#ccc', 'none'), gx: p('M1 4l14 8M15 4L1 12M4 8h8', 'none', '#76672c', 1.4) + o(8, 8, 2.5, '#e4c33d', '#77651a'),
  bxray: blueWire('#a9adcf', '#787eae', '#5c629c', '#2c315e'), bdash: blueWire('#fff', '#fff', '#fff', '#555').replace(/<path/g, '<path stroke-dasharray="3 1"'), bwire: blueWire('none', 'none', 'none', '#333'), bhid: cube('#fff', '#fff', '#fff', '#777'), bshade: cube('#c9c8b5', '#8f8d72', '#69684f'), bzebra: cube('#ddd', '#222', '#111') + p('M1 7l9 2 5-3M1 10l9 2 5-3', 'none', '#eee', 1.2), bmono: cube('#d8d9f3', '#8f92d1', '#6b6eb4', '#34376c'),
  tg1: o(8, 8, 6.5, '#fff', '#222', 1.4) + o(8, 8, 3.5, '#eee', '#222', 1.3) + p('M8 5v6M5 8h6', 'none'), tg2: o(8, 8, 6.5, '#f5f5f5', '#888', 1.2) + p('M3 8h10M4 6h8v4H4z', 'none', '#777'), tg3: o(8, 8, 6.5, '#f5f5f5', '#888', 1.2) + p('M5 5h6v6H5zM8 3v10', 'none', '#777'), tg4: p('M3 3h10v4H3zM3 9h5v4H3zM10 8h4v5h-4zM5 3v10', '#bbb', '#777'), tg5: p('M2 4l9 3v6L5 12zM9 8l5-6M12 2h3v3', '#eee', '#aaa'), tg6: p('M1 5h10l2 8z', '#777', '#666') + p('M11 5l4-3v4', 'none', '#777', 1.4), tg7: p('M0 2h16M0 14h16M1 1v14M15 1v14', 'none', '#555', 1.4) + p('M3 4l10 8M13 4L3 12', 'none', '#cc343a', 1.6),
  or1: p('M1 6l7 1 6-5v4L8 9v5l-6-1z', '#cc6b31', '#713313') + p('M3 10l10-5', 'none', '#f1ae7d'), or2: e(7, 11, 5.5, 4, '#f1d938', '#333', 1.2) + p('M4 1h3v5h2L5.500 9 2 6h2z', '#18217e', '#18217e', .4) + p('M9 9l6-4v4', '#cf8145', '#6b3919'), or3: p('M1 9h9v6H1z', '#f2f2f2', '#222', 1.2) + p('M4 1h3v4h2L5.500 9 2 5h2z', '#18217e', '#18217e', .4) + p('M9 9l6-5v4', '#cf8145', '#6b3919'),
  st1: o(8, 8, 7, '#f7e2da', '#b4532f', 1.5) + p('M6 6q2-3 3 0L8 9v3', 'none', '#c38667'), st2: o(8, 8, 7, '#f2edc0', '#222', 1.5) + p('M8 4v8', 'none', '#222', 2.2) + p('M5 7h6', 'none'), st3: o(8, 8, 7, '#f8e8dd', '#b25f3b', 1.5) + p('M11 6q-2-3-5 0-2 4 2 5 2 0 3-2', 'none', '#c6916e', 1.3), sthelp: o(8, 8, 7, '#fff', '#222', 1.7) + t('?', 8, 12.500, '#222', 12)
};
const gaps = { ',': 's1', '|': 's3', ':': 's4', ';': 's6' };
document.querySelectorAll('[data-tools]').forEach(bar => {
  bar.innerHTML = bar.dataset.tools.split(' ').map(name => {
    if (gaps[name]) return `<span class="${gaps[name]}"></span>`;
    const key = name.replace('*', '');
    return `<button class="tool${key === name ? '' : ' active'}" aria-label="${key}"><svg viewBox="0 0 16 16">${icons[key]}</svg></button>`;
  }).join('');
});
const colors = ['#d87093', '#c71585', '#ff1493', '#ff69b4', '#ffb6c1', '#fcbccb', '#fde2e4', '#fdf0f5', '#f5efe6', '#fffafa', '#fdf3ee', '#fde1bd', '#f08080', '#e9967a', '#fa8072', '#ff6347', '#cd5c5c', '#a52a2a', '#dc143c', '#ff0000', '#8b0000', '#800000', '#b22222', '#ff4500'];
document.querySelector('.swatches').innerHTML = colors.map(c => `<button aria-label="${c}" style="background:${c}"></button>`).join('');
```
